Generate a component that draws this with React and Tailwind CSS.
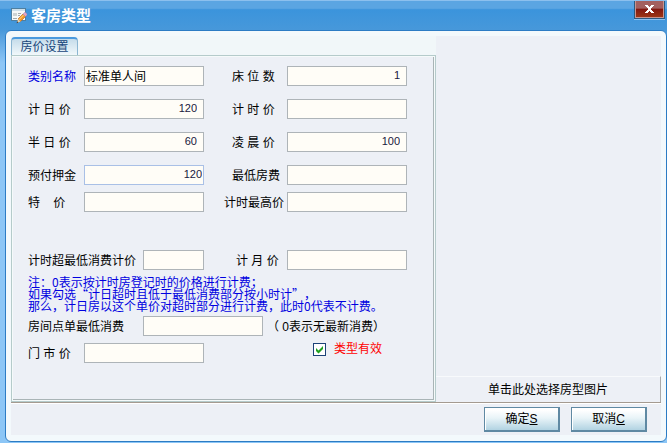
const inputBase = 'h-5 min-w-0 border bg-[#fffdf7] pb-0.5 text-[11px] leading-4 text-[#201840] outline-none'

function Field({ id, label, value = '', labelClass = '', inputClass = 'border-[#aeb4b8] pr-1.5' }) {
  return (
    <>
      <label htmlFor={id} className={`pt-0.5 whitespace-pre ${labelClass}`}>{label}</label>
      <input id={id} type="text" defaultValue={value} className={`${inputBase} text-right ${inputClass}`} />
    </>
  )
}

function FormIcon() {
  return (
    <svg width="16" height="16" viewBox="0 0 16 16" aria-hidden="true">
      <rect x="0.5" y="0.5" width="14" height="12" fill="#f6f8f8" stroke="#4f7fa0" />
      <rect x="1" y="1" width="13" height="2" fill="#cfe0ea" />
      <rect x="2" y="5" width="4" height="3" fill="#cdd3d4" />
      <path d="M7 5.5h3M7 7.5h2M2 10.5h4" stroke="#a3abae" />
      <path d="M7 11l5-5 2.5 2.5-5 5z" fill="#f59a2a" stroke="#c06a1e" strokeWidth="0.7" />
      <path d="M8.2 11.4l4.6-4.6" stroke="#ffdf86" />
      <path d="M12 6l1.5-1.5h1L16 6v1l-1.5 1.5z" fill="#e2a3c2" stroke="#9a86b4" strokeWidth="0.5" />
      <path d="M7 11l2.5 2.5L6 15z" fill="#f0d2a4" />
      <path d="M6.3 13.2l1.2 1.2L5.5 15.2z" fill="#4f3a30" />
    </svg>
  )
}

function CloseButton() {
  return (
    <button
      type="button"
      aria-label="关闭"
      className="mr-0.5 flex h-[18px] w-[31px] items-center justify-center self-start border border-t-0 border-[#2c5a80] bg-[#8a1a12] shadow-[0_1px_0_#8cc0ee]"
    >
      <span className="flex h-full w-full items-center justify-center border border-t-0 border-[#c8948e] bg-linear-to-b from-[#a3605f] from-45% via-[#821610] via-50% to-[#9c3414]">
        <svg width="9" height="8" viewBox="0 0 9 8" aria-hidden="true">
          <path d="M0 0h3v1h1v1h1V1h1V0h3v1H8v1H7v1H6v2h1v1h1v1h1v1H6V7H5V6H4v1H3v1H0V7h1V6h1V5h1V3H2V2H1V1H0z" fill="#fff" />
        </svg>
      </span>
    </button>
  )
}

function DialogButton({ text, hotkey }) {
  return (
    <button
      type="button"
      className="h-[25px] w-[76px] border border-r-2 border-b-2 border-[#5f89a3] bg-linear-to-b from-white from-10% via-[#e9f4f8] via-45% to-[#b2d3e2] text-center leading-5 shadow-[inset_1px_1px_0_#ffffff]"
    >
      {text}<u>{hotkey}</u>
    </button>
  )
}

const rowGrid = 'grid grid-cols-[56px_120px_83px_120px] items-center'

export default function App() {
  return (
    <div
      lang="zh-CN"
      className="flex min-h-screen flex-col bg-[#8cc6f6] pb-px font-['Liberation_Sans','Noto_Sans_CJK_SC',sans-serif] text-xs leading-4 text-black [text-spacing-trim:space-all]"
    >
      {/* 标题栏 */}
      <header className="flex h-[30px] items-center border-t border-[#8cc0ee] bg-linear-to-b from-[#5ba5e2] from-25% via-[#3b94dc] via-30% to-[#4798da] pl-[11px]">
        <FormIcon />
        <h1 className="ml-1 flex-1 text-[15px] leading-5 font-bold text-white">客房类型</h1>
        <CloseButton />
      </header>

      <div className="flex flex-1 bg-linear-to-b from-[#4798da] to-[#8cc6f6] to-8% pl-[5px]">
        <main className="flex flex-1 flex-col rounded-md border border-[#2c7cc4] bg-[#f3f9fc] px-[5px] pt-[5px] pb-1.5">
          <div className="flex flex-1 border-b border-[#a49a90]">
            {/* 房价设置 */}
            <section className="flex w-[425px] flex-col bg-[#f1f7f9]">
              <div role="tablist" className="flex">
                <button
                  type="button"
                  role="tab"
                  aria-selected="true"
                  className="mt-px h-[18px] w-[67px] rounded-t border border-t-2 border-b-0 border-[#8bb6d2] border-t-[#4a9ade] bg-linear-to-b from-[#c5dcea] to-[#f1f8fb] text-center leading-4 text-[#17457a]"
                >
                  房价设置
                </button>
              </div>

              <div className="flex flex-1 border border-[#b5cbcb] bg-[#f5fafa] p-px">
                <form className="flex-1 border-r border-b border-[#a9b4b6] bg-[#edf0f6] pt-[9px] pl-[15px]">
                  <div className={rowGrid}>
                    <label htmlFor="name" className="pt-0.5 text-[#0000e0]">类别名称</label>
                    <input
                      id="name"
                      type="text"
                      defaultValue="标准单人间"
                      className="h-5 min-w-0 border border-[#aeb4b8] bg-[#fffdf7] px-px pb-0.5 text-xs leading-4 outline-none"
                    />
                    <Field id="beds" label="床 位 数" value="1" labelClass="pl-7" />
                  </div>
                  <div className={`mt-[13px] ${rowGrid}`}>
                    <Field id="day" label="计 日 价" value="120" />
                    <Field id="hour" label="计 时 价" labelClass="pl-7" />
                  </div>
                  <div className={`mt-[13px] ${rowGrid}`}>
                    <Field id="half" label="半 日 价" value="60" />
                    <Field id="dawn" label="凌 晨 价" value="100" labelClass="pl-7" />
                  </div>
                  <div className={`mt-[13px] ${rowGrid}`}>
                    <Field id="deposit" label="预付押金" value="120" inputClass="border-[#a9c0e6] pr-px" />
                    <Field id="minRoom" label="最低房费" labelClass="pl-7" />
                  </div>
                  <div className={`mt-[7px] ${rowGrid}`}>
                    <Field id="special" label="特    价" />
                    <Field id="maxHour" label="计时最高价" labelClass="pl-5" />
                  </div>
                  <div className="mt-[38px] grid grid-cols-[115px_61px_83px_120px] items-center">
                    <Field id="over" label="计时超最低消费计价" />
                    <Field id="month" label="计 月 价" labelClass="pl-8" />
                  </div>

                  <p className="mt-1.5 leading-3 font-['Noto_Sans_CJK_SC',sans-serif] whitespace-nowrap text-[#0000e0]">
                    注：0表示按计时房登记时的价格进行计费；<br />
                    如果勾选“计日超时且低于最低消费部分按小时计”，<br />
                    那么，计日房以这个单价对超时部分进行计费，此时0代表不计费。
                  </p>

                  <div className="mt-1 grid grid-cols-[115px_120px_1fr] items-center">
                    <Field id="order" label="房间点单最低消费" />
                    <span className="pt-0.5 pl-1 whitespace-nowrap">（ 0表示无最新消费）</span>
                  </div>
                  <div className="mt-[7px] grid grid-cols-[56px_120px_1fr] items-center">
                    <Field id="retail" label="门 市 价" />
                    <div className="flex h-3 items-center gap-2 self-start pl-[109px]">
                      <span className="grid">
                        <input
                          id="valid"
                          type="checkbox"
                          defaultChecked
                          className="peer col-start-1 row-start-1 h-[13px] w-[13px] appearance-none border border-[#1c4278] bg-white"
                        />
                        <svg
                          width="13"
                          height="13"
                          viewBox="0 0 13 13"
                          aria-hidden="true"
                          className="pointer-events-none invisible col-start-1 row-start-1 peer-checked:visible"
                        >
                          <path d="M3 5v3l2.5 2.5L10 6V3L5.5 7.5z" fill="#1fa01f" />
                        </svg>
                      </span>
                      <label htmlFor="valid" className="text-[#ff0000]">类型有效</label>
                    </div>
                  </div>
                </form>
              </div>
            </section>

            {/* 房型图片 */}
            <section className="flex flex-1 flex-col bg-[#edf0f6]">
              <div className="flex-1" />
              <button
                type="button"
                className="h-[26px] border-t border-r border-t-[#f8fafc] border-r-[#a9a9a9] text-center leading-6"
              >
                单击此处选择房型图片
              </button>
            </section>
          </div>

          <footer className="flex justify-end gap-[11px] border-t border-white bg-[#edf0f6] pt-[3px] pr-3.5 pb-[3px]">
            <DialogButton text="确定" hotkey="S" />
            <DialogButton text="取消" hotkey="C" />
          </footer>
        </main>
      </div>
    </div>
  )
}
